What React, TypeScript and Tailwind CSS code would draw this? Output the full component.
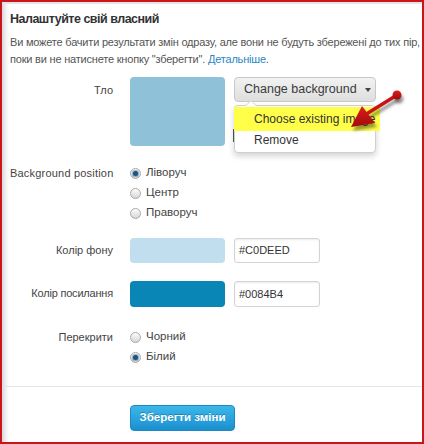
import React from "react";

function Radio({ checked, label }: { checked?: boolean; label: string }) {
  return (
    <div className="flex items-center h-[20px]">
      <span className="relative w-[11px] h-[11px] rounded-full border border-[#a8a8a8] bg-gradient-to-b from-[#fdfdfd] to-[#d6d6d6] flex items-center justify-center">
        {checked && <span className="w-[5px] h-[5px] rounded-full bg-[#21527c] shadow-[0_0_1px_1px_rgba(60,120,170,0.6)]" />}
      </span>
      <span className="ml-[5px] text-[11.5px] text-[#444]">{label}</span>
    </div>
  );
}

export default function App() {
  return (
    <div
      className="relative w-[424px] h-[444px] bg-white border-2 border-[#c9161d] overflow-hidden"
      style={{ fontFamily: '"Liberation Sans", Arial, sans-serif' }}
    >
      <div className="absolute inset-0 border-t-2 border-[#e4e4e4] shadow-[inset_7px_0_5px_-4px_rgba(0,0,0,0.16)] pointer-events-none" />
      <div className="relative pt-[9px]">
        <div className="pl-[8px] pr-[2px]">
          <h1 className="text-[12.5px] font-bold leading-[16px] tracking-[-0.5px] text-[#333]">Налаштуйте свій власний</h1>
          <p className="mt-[7px] text-[11px] leading-[17px] tracking-[-0.2px] text-[#555] whitespace-nowrap">
            Ви можете бачити результати змін одразу, але вони не будуть збережені до тих пір,
            <br />
            поки ви не натиснете кнопку "зберегти". <span className="text-[#2a86bf]">Детальніше</span>.
          </p>

          {/* Тло */}
          <div className="mt-[9px] flex">
            <div className="w-[103px] text-right text-[11px] leading-[16px] text-[#444] pt-[5px]">Тло</div>
            <div className="ml-[17px] flex">
              <div className="w-[95px] h-[69px] rounded-[4px] bg-[#8fc1d9]" />
              <div className="relative ml-[9px]">
                <div className="w-[142px] h-[25px] rounded-[4px] border border-[#c8c8c8] bg-gradient-to-b from-[#f2f2f2] to-[#dedede] flex items-center pl-[9px] text-[12.5px] text-[#3a3a3a]">
                  Change background
                  <span className="ml-[8px] w-0 h-0 border-l-[3.5px] border-r-[3.5px] border-t-[4px] border-l-transparent border-r-transparent border-t-[#444]" />
                </div>
                <div className="absolute left-[-1px] top-[52px] w-[1px] h-[13px] bg-[#555]" />
                <div className="absolute left-0 top-[28px] w-[142px] h-[48px] bg-white border border-[#cfcfcf] rounded-[4px] shadow-[0_3px_6px_rgba(0,0,0,0.18)]">
                  <div className="absolute left-[10px] top-[-6px] w-0 h-0 border-l-[6px] border-r-[6px] border-b-[6px] border-l-transparent border-r-transparent border-b-[#cfcfcf]" />
                  <div className="absolute left-[11px] top-[-5px] w-0 h-0 border-l-[5px] border-r-[5px] border-b-[5px] border-l-transparent border-r-transparent border-b-white" />
                  <div className="absolute left-[-1px] top-[1px] w-[146px] h-[24px] bg-[#ffff4a] blur-[0.6px]" />
                  <div className="relative pt-[3px]">
                    <div className="h-[21px] leading-[21px] pl-[19px] text-[12px] text-[#333] whitespace-nowrap">Choose existing image</div>
                    <div className="h-[21px] leading-[21px] pl-[19px] text-[12px] text-[#333]">Remove</div>
                  </div>
                </div>
              </div>
            </div>
          </div>

          {/* Background position */}
          <div className="mt-[17px] flex">
            <div className="w-[103px] text-right text-[11px] leading-[20px] tracking-[0.2px] text-[#444] whitespace-nowrap">Background position</div>
            <div className="ml-[17px] flex flex-col">
              <Radio checked label="Ліворуч" />
              <Radio label="Центр" />
              <Radio label="Праворуч" />
            </div>
          </div>

          {/* Колір фону */}
          <div className="mt-[15px] flex">
            <div className="w-[103px] text-right text-[11px] leading-[25px] text-[#444]">Колір фону</div>
            <div className="ml-[17px] flex">
              <div className="w-[95px] h-[25px] rounded-[4px] bg-[#c0deed]" />
              <div className="ml-[9px] w-[86px] h-[25px] rounded-[3px] border border-[#d4d4d4] shadow-[inset_0_1px_2px_rgba(0,0,0,0.08)] pl-[4px] text-[11px] leading-[23px] text-[#333]">#C0DEED</div>
            </div>
          </div>

          {/* Колір посилання */}
          <div className="mt-[18px] flex">
            <div className="w-[103px] text-right text-[11px] leading-[25px] tracking-[-0.2px] text-[#444]">Колір посилання</div>
            <div className="ml-[17px] flex">
              <div className="w-[95px] h-[26px] rounded-[4px] bg-[#0a86b6]" />
              <div className="ml-[9px] w-[86px] h-[26px] rounded-[3px] border border-[#d4d4d4] shadow-[inset_0_1px_2px_rgba(0,0,0,0.08)] pl-[4px] text-[11px] leading-[24px] text-[#333]">#0084B4</div>
            </div>
          </div>

          {/* Перекрити */}
          <div className="mt-[20px] flex">
            <div className="w-[103px] text-right text-[11px] leading-[20px] text-[#444]">Перекрити</div>
            <div className="ml-[17px] flex flex-col">
              <Radio label="Чорний" />
              <Radio checked label="Білий" />
            </div>
          </div>
        </div>

        <div className="mt-[19px] h-px bg-[#e6e6e6]" />

        <div className="mt-[17px] pl-[128px]">
          <button className="w-[105px] h-[26px] rounded-[4px] border border-[#1b88c4] bg-gradient-to-b from-[#3cb7ea] to-[#1a8fcf] text-white text-[11.5px] font-bold [text-shadow:0_-1px_0_rgba(0,0,0,0.25)]">
            Зберегти зміни
          </button>
        </div>
      </div>

      {/* red arrow */}
      <svg className="absolute left-0 top-0 pointer-events-none" width="424" height="444" viewBox="2 2 424 444">
        <defs>
          <filter id="bl" x="-50%" y="-50%" width="200%" height="200%">
            <feGaussianBlur stdDeviation="1.8" />
          </filter>
          <linearGradient id="rg" x1="0" y1="0" x2="0" y2="1">
            <stop offset="0" stopColor="#e01c1c" />
            <stop offset="1" stopColor="#a00b0b" />
          </linearGradient>
        </defs>
        <g transform="translate(2,4)" fill="rgba(0,0,0,0.4)" stroke="rgba(0,0,0,0.4)" filter="url(#bl)">
          <line x1="397" y1="95" x2="368" y2="113" strokeWidth="3.5" />
          <circle cx="397" cy="95" r="4.5" stroke="none" />
          <polygon points="351,127 362,106 375,123" stroke="none" />
        </g>
        <line x1="397" y1="95" x2="368" y2="113" stroke="#c81414" strokeWidth="3.5" strokeLinecap="round" />
        <circle cx="397" cy="95" r="4.5" fill="url(#rg)" />
        <polygon points="351,127 362,106 375,123" fill="url(#rg)" />
      </svg>
    </div>
  );
}
